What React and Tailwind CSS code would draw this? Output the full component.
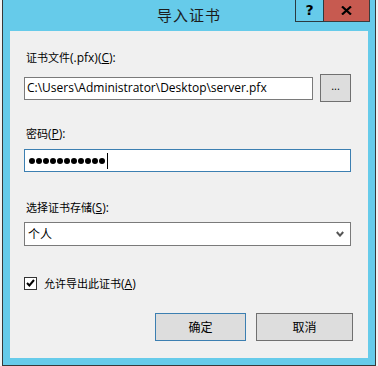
import React from "react";

const latin = { fontFamily: '"Open Sans", "Noto Sans CJK SC", sans-serif' };

// CJK runs render a bit smaller than the Latin text, like Windows font linking
const Cjk = ({ children }) => (
  <span className="text-[11px]" style={{ fontFamily: '"Noto Sans CJK SC", sans-serif' }}>
    {children}
  </span>
);

const Label = ({ cjk, rest, hot, className = "" }) => (
  <div className={"h-[16px] leading-[16px] text-[12px] text-black pl-[2px] " + className}>
    <Cjk>{cjk}</Cjk>
    {rest}(<span className="underline">{hot}</span>):
  </div>
);

export default function App() {
  return (
    <div className="w-[378px] h-[366px] bg-[#f3f3f3] overflow-hidden" style={latin}>
      <div className="ml-[2px] w-[374px] h-[366px] bg-[#66cbea] border-l border-r border-b border-[#383838] relative">
        {/* title bar */}
        <div className="h-[31px] flex items-center justify-center">
          <span
            className="text-[15px] text-[#1c1c1c] tracking-[1px]"
            style={{ fontFamily: '"Noto Sans CJK SC", sans-serif' }}
          >
            导入证书
          </span>
        </div>
        <div className="absolute top-0 right-[5px] flex">
          <div className="w-[29px] h-[22px] border border-t-0 border-[#2b3a40] flex items-center justify-center text-[14px] font-bold text-black" style={{ fontFamily: '"DejaVu Sans", sans-serif' }}>
            ?
          </div>
          <div className="w-[46px] h-[22px] border border-l-0 border-t-0 border-[#3b3b3b] bg-[#c75a50] flex items-center justify-center">
            <svg width="11" height="9" viewBox="0 0 11 9">
              <path d="M1 0.5 L10 8.5 M10 0.5 L1 8.5" stroke="#000" strokeWidth="2.2" />
            </svg>
          </div>
        </div>

        {/* client area */}
        <div className="mx-[7px] h-[327px] bg-[#f0f0f0] pl-[14px] pt-[18px]">
          <Label cjk="证书文件" rest="(.pfx)" hot="C" />
          <div className="mt-[9px] flex items-center h-[28px]">
            <div className="w-[289px] h-[23px] bg-white border border-[#7a7a7a] flex items-center pl-[2px] text-[12px] text-black whitespace-nowrap overflow-hidden">
              C:\Users\Administrator\Desktop\server.pfx
            </div>
            <div className="ml-[7px] w-[31px] h-[28px] bg-[#dddddd] border border-[#707070] flex items-center justify-center text-[11px] text-black pb-[3px]">
              ...
            </div>
          </div>

          <Label cjk="密码" rest="" hot="P" className="mt-[23px]" />
          <div className="mt-[8px] w-[327px] h-[23px] bg-white border border-[#3c7fb1] flex items-center pl-[4px]">
            <div className="flex gap-[1px]">
              {Array.from({ length: 11 }).map((_, i) => (
                <div key={i} className="w-[6px] h-[6px] rounded-full bg-black" />
              ))}
            </div>
            <div className="ml-[2px] w-[1px] h-[16px] bg-black" />
          </div>

          <Label cjk="选择证书存储" rest="" hot="S" className="mt-[27px]" />
          <div className="mt-[7px] w-[327px] h-[24px] bg-white border border-[#7a7a7a] flex items-center justify-between pl-[3px] pr-[6px]">
            <Cjk>
              <span className="text-[12px]">个人</span>
            </Cjk>
            <svg width="8" height="6" viewBox="0 0 8 6">
              <path d="M0.8 1 L4 4.6 L7.2 1" fill="none" stroke="#555" strokeWidth="2" />
            </svg>
          </div>

          <div className="mt-[29px] h-[16px] flex items-center">
            <div className="w-[13px] h-[13px] bg-white border border-[#333] flex items-center justify-center">
              <svg width="9" height="8" viewBox="0 0 9 8">
                <path d="M1 4 L3.4 6.5 L8 1" fill="none" stroke="#000" strokeWidth="2" />
              </svg>
            </div>
            <span className="ml-[7px] text-[12px] text-black leading-[16px]">
              <Cjk>允许导出此证书</Cjk>(<span className="underline">A</span>)
            </span>
          </div>

          <div className="mt-[22px] flex pl-[131px] gap-[10px]">
            <div className="w-[91px] h-[28px] bg-[#dddddd] border border-[#3c7fb1] flex items-center justify-center">
              <Cjk>
                <span className="text-[12px]">确定</span>
              </Cjk>
            </div>
            <div className="w-[97px] h-[28px] bg-[#dddddd] border border-[#707070] flex items-center justify-center">
              <Cjk>
                <span className="text-[12px]">取消</span>
              </Cjk>
            </div>
          </div>
        </div>
      </div>
    </div>
  );
}
